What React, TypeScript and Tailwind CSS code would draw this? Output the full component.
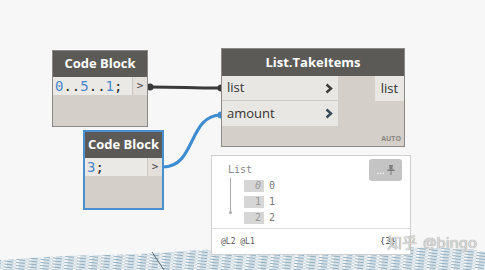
import React from "react";

const mono = { fontFamily: '"DejaVu Sans Mono", "Liberation Mono", monospace' };
const sans = { fontFamily: '"Open Sans", "Noto Sans", sans-serif' };

function Chevron({ color = "#3b3b3b" }: { color?: string }) {
  return (
    <svg width="8" height="11" viewBox="0 0 8 11">
      <path d="M1.5 1.5 L6 5.5 L1.5 9.5" fill="none" stroke={color} strokeWidth="2.4" />
    </svg>
  );
}

function CodeBlock({
  left,
  top,
  width,
  height,
  selected,
  children,
}: {
  left: number;
  top: number;
  width: number;
  height: number;
  selected?: boolean;
  children: React.ReactNode;
}) {
  return (
    <div
      className={`absolute flex flex-col bg-[#d4d0c9] ${selected ? "border-2 border-[#4a8fcf]" : "border border-[#8c8a86]"}`}
      style={{ left, top, width, height }}
    >
      <div
        className="h-[26px] bg-[#5b5a57] text-white text-[13px] font-bold flex items-center justify-center shrink-0"
        style={sans}
      >
        Code Block
      </div>
      <div className="h-[18px] flex bg-[#ebe9e5] shrink-0">
        <div className="flex-1 flex items-center pl-[2px] text-[14px] text-[#2a2a2a]" style={mono}>
          {children}
        </div>
        <div className="w-[15px] border-l border-[#c9c6c0] bg-[#e3e0db] flex items-center justify-center text-[11px] text-[#444]" style={mono}>
          &gt;
        </div>
      </div>
    </div>
  );
}

export default function App() {
  return (
    <div className="relative w-[485px] h-[270px] overflow-hidden bg-[#f7f7f7]">
      {/* background grid */}
      <svg className="absolute left-0 top-0" width="485" height="270">
        <defs>
          <pattern id="hatch" width="12" height="3" patternUnits="userSpaceOnUse" patternTransform="rotate(7)">
            <line x1="0" y1="0.5" x2="9" y2="0.5" stroke="#92b0c2" strokeWidth="1" />
            <line x1="3" y1="2" x2="12" y2="2" stroke="#b4c9d6" strokeWidth="1" />
          </pattern>
        </defs>
        <polygon points="0,260 60,256 140,254 200,250 260,248 330,247 400,247 470,249 485,252 485,270 0,270" fill="url(#hatch)" />
        <line x1="152" y1="252" x2="164" y2="270" stroke="#3c4a50" strokeWidth="0.8" />
      </svg>

      {/* wires */}
      <svg className="absolute left-0 top-0" width="485" height="270">
        <path d="M150 87 C 185 87, 186 88, 221 88" fill="none" stroke="#3a3a3a" strokeWidth="3" />
        <circle cx="150" cy="87" r="3.5" fill="#3a3a3a" />
        <path d="M163 167 C 196 167, 188 115, 221 115" fill="none" stroke="#3d8bd0" strokeWidth="3" />
        <circle cx="221" cy="88" r="3.5" fill="#3a3a3a" />
        <circle cx="221" cy="115" r="3.5" fill="#3d8bd0" />
      </svg>

      <CodeBlock left={52} top={50} width={96} height={77}>
        <span className="text-[#4a86c8]">0</span>
        <span>..</span>
        <span className="text-[#4a86c8]">5</span>
        <span>..</span>
        <span className="text-[#4a86c8]">1</span>
        <span>;</span>
      </CodeBlock>

      <CodeBlock left={83} top={130} width={81} height={80} selected>
        <span className="text-[#4a86c8]">3</span>
        <span>;</span>
      </CodeBlock>

      {/* List.TakeItems */}
      <div className="absolute left-[221px] top-[48px] w-[184px] h-[99px] flex flex-col bg-[#d4d0c9] border border-[#8c8a86]">
        <div className="h-[27px] shrink-0 bg-[#5b5a57] text-white text-[13px] font-bold flex items-center justify-center" style={sans}>
          List.TakeItems
        </div>
        <div className="flex flex-1">
          <div className="w-[116px] flex flex-col">
            <div className="h-[25px] bg-[#e9e7e3] border-b border-[#cfccc6] flex items-center justify-between pl-[5px] pr-[5px] text-[13px] text-[#333]" style={sans}>
              <span>list</span>
              <Chevron />
            </div>
            <div className="h-[25px] bg-[#e9e7e3] flex items-center justify-between pl-[5px] pr-[5px] text-[13px] text-[#333]" style={sans}>
              <span>amount</span>
              <Chevron color="#35485a" />
            </div>
          </div>
          <div className="flex-1 flex flex-col items-end justify-between">
            <div className="w-[29px] h-[25px] bg-[#e9e7e3] flex items-center justify-center text-[13px] text-[#333]" style={sans}>
              list
            </div>
            <div className="pr-[3px] pb-[2px] text-[7px] font-bold text-[#8a8782]" style={sans}>
              AUTO
            </div>
          </div>
        </div>
      </div>

      {/* preview bubble */}
      <div className="absolute left-[211px] top-[155px] w-[200px] h-[100px] flex flex-col bg-white border border-[#cfcfcf]">
        <div className="flex-1 relative flex">
          <div className="pl-[16px] pt-[8px] flex flex-col" style={mono}>
            <div className="text-[10px] text-[#888] leading-[12px]">List</div>
            <div className="flex">
              <div className="w-[3px] flex flex-col items-center ml-[1px] mt-[2px]">
                <div className="w-px h-[33px] bg-[#aaa]" />
                <div className="w-[3px] h-[3px] rounded-full bg-[#aaa]" />
              </div>
              <div className="flex flex-col gap-[4px] ml-[12px] mt-[4px]">
                {["0", "1", "2"].map((n) => (
                  <div key={n} className="flex items-center text-[10px] leading-[12px]">
                    <span className={`w-[20px] h-[12px] bg-[#d6d6d6] text-right pr-[3px] text-[#999] ${n === "0" ? "italic" : ""}`}>{n}</span>
                    <span className="ml-[5px] text-[#777]">{n}</span>
                  </div>
                ))}
              </div>
            </div>
          </div>
          <div className="absolute right-[8px] top-[3px] w-[33px] h-[22px] rounded-[3px] bg-[#c4c4c4] flex items-center justify-center gap-[2px] text-[10px] text-white">
            <span className="leading-none">...</span>
            <svg width="8" height="10" viewBox="0 0 8 10">
              <rect x="2" y="0" width="4" height="1.5" fill="#7a7a7a" />
              <rect x="2.5" y="1.5" width="3" height="3" fill="#7a7a7a" />
              <rect x="0.5" y="4.5" width="7" height="1.5" fill="#7a7a7a" />
              <rect x="3.5" y="6" width="1" height="4" fill="#7a7a7a" />
            </svg>
          </div>
        </div>
        <div className="h-[26px] shrink-0 border-t border-[#dcdcdc] flex items-center justify-between pl-[9px] pr-[14px] text-[8px] text-[#555]" style={mono}>
          <span>@L2 @L1</span>
          <span className="text-[9px] text-[#444]">{"{3}"}</span>
        </div>
      </div>

      {/* watermark */}
      <div
        className="absolute left-[387px] top-[231px] text-[15px] text-[#dadada] flex items-center gap-[6px]"
        style={{ fontFamily: '"Noto Sans CJK SC", "Noto Sans", sans-serif', textShadow: "0 0 1px #777" }}
      >
        <span>知乎</span>
        <span style={{ fontFamily: '"Noto Sans", sans-serif' }}>@bingo</span>
      </div>
    </div>
  );
}
